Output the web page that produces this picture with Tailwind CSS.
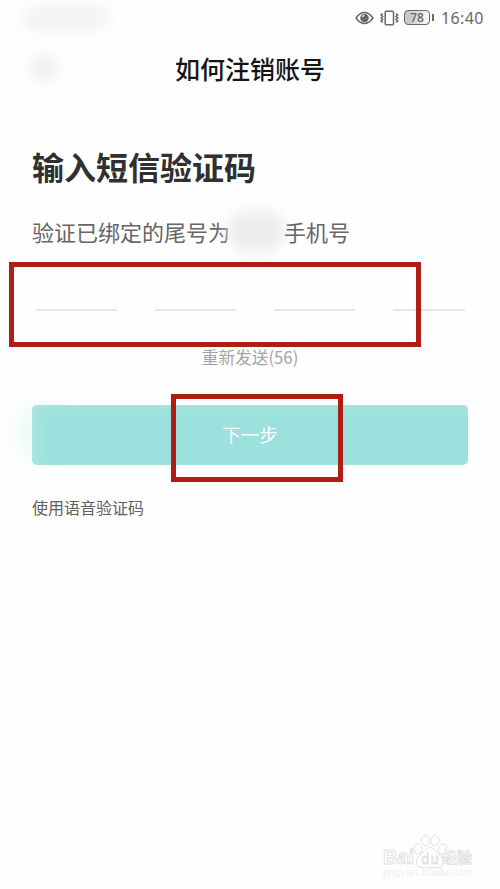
<!DOCTYPE html>
<html lang="zh-CN">
<head>
<meta charset="utf-8">
<title>如何注销账号</title>
<script src="https://cdn.jsdelivr.net/npm/@tailwindcss/browser@4"></script>
</head>
<body class="bg-[#fefefe] font-['Noto_Sans_CJK_SC',sans-serif]">
<div class="relative flex h-[889px] w-[500px] flex-col overflow-hidden">
  <!-- status bar -->
  <header class="flex h-[35px] items-center justify-between pr-[16px] pl-6 text-[#686868]">
    <div class="h-4 w-[84px] rounded-full bg-[#ececec] blur-[9px]"></div>
    <div class="flex items-center">
      <svg class="h-[14px] w-[19px]" viewBox="0 0 19 14" fill="none" stroke="currentColor" stroke-width="1.500"><path d="M1 7C4 2.700 6.500 1.500 9.500 1.500S15 2.700 18 7C15 11.300 12.500 12.500 9.500 12.500S4 11.300 1 7Z"/><circle cx="9.500" cy="7" r="4.300" fill="currentColor" stroke="none"/><path d="M9.200 3.200A2.300 2.300 0 0 1 7 6.200A3.600 3.600 0 0 1 9.200 3.200Z" fill="#fefefe" stroke="none"/></svg>
      <svg class="ml-[5px] h-4 w-[21px]" viewBox="0 0 21 16" fill="none" stroke="currentColor" stroke-width="1.500"><rect x="6.200" y="1.200" width="8.300" height="13.600" rx="1"/><path d="M3.700 3.500L2 5L3.700 6.500L2 8L3.700 9.500L2 11L3.700 12.500M17 3.500L18.700 5L17 6.500L18.700 8L17 9.500L18.700 11L17 12.500" stroke-width="1.500"/></svg>
      <div class="ml-[4px] flex items-center">
        <div class="flex h-[15px] w-[26px] items-center justify-center rounded-[4px] border-[1.500px] border-[#686868] bg-linear-to-r from-[#c9c9c9] from-20% to-[#f4f4f4] to-85% font-['Open_Sans',sans-serif] text-[12px] leading-none font-semibold">78</div>
        <div class="ml-[2px] h-[7px] w-[2px] bg-[#686868]"></div>
      </div>
      <time class="ml-[7px] w-[43px] font-['Noto_Sans',sans-serif] text-[16px] leading-5 tracking-[0.400px] whitespace-nowrap">16:40</time>
    </div>
  </header>
  <!-- title bar -->
  <div class="grid h-[66px] grid-cols-[1fr_auto_1fr] items-center px-8">
    <div class="h-6 w-6 rounded-full bg-[#e9e9e9] blur-[9px]"></div>
    <h1 class="text-[25px] leading-9 font-medium text-[#151515]">如何注销账号</h1>
  </div>
  <main class="flex flex-col px-8">
    <h2 class="mt-[41px] text-[32px] leading-[48px] font-bold text-[#303030]">输入短信验证码</h2>
    <p class="mt-[25px] flex h-8 items-center text-[22px] leading-8 whitespace-nowrap text-[#666]">
      <span>验证已绑定的尾号为</span>
      <span class="relative -ml-[2px] h-10 w-[57px] shrink-0 rounded-[40%] bg-[#ececec] blur-[7px]"></span>
      <span class="relative -ml-px">手机号</span>
    </p>
    <div class="mt-[62px] ml-1 flex h-[2px] w-[428px] gap-[38px]">
      <i class="w-[81px] shrink-0 bg-[#e5e5e5]"></i><i class="w-[81px] shrink-0 bg-[#e5e5e5]"></i><i class="w-[81px] shrink-0 bg-[#e5e5e5]"></i><i class="w-[72px] shrink-0 bg-[#e5e5e5]"></i>
    </div>
    <p class="mt-[34px] text-center text-[16.700px] leading-6 text-[#a4a4a4]">重新发送(56)</p>
    <div class="relative mt-[36px] h-[60px]">
      <div class="absolute top-1 -left-3 h-[46px] w-10 rounded-full bg-[#b8eee9]/35 blur-[12px]"></div>
      <button class="relative flex h-full w-full items-center justify-center rounded-[5px] bg-[#9ce1dd] text-[18.500px] text-white shadow-[inset_12px_6px_14px_-6px_#afe5e0]">下一步</button>
    </div>
    <p class="mt-[30px] text-[16px] leading-6 text-[#606060]">使用语音验证码</p>
  </main>
  <!-- highlight frames over the form -->
  <div class="absolute top-[262px] left-[9px] h-[85px] w-[412px] border-[5px] border-[#b01d14]"></div>
  <div class="absolute top-[394px] left-[171px] h-[88px] w-[172px] border-[5px] border-[#b01d14]"></div>
  <!-- watermark -->
  <svg class="absolute top-[830px] left-[378px] h-[54px] w-[104px]" viewBox="0 0 104 54" fill="#fff" stroke="#dfdfdf" stroke-width="1">
    <g><ellipse cx="40" cy="19" rx="4" ry="5" transform="rotate(-15 40 19)"/><ellipse cx="47.500" cy="10.500" rx="4" ry="5.200"/><ellipse cx="57" cy="10.500" rx="4" ry="5.200"/><ellipse cx="64.500" cy="19" rx="4" ry="5" transform="rotate(15 64.500 19)"/><path d="M52 17.500C48 17.500 46 22 42 25.500C37 29 37 37 44 37.500C48 38 56 38 60 37.500C67 37 67 29 62 25.500C58 22 56 17.500 52 17.500Z"/></g>
    <text x="5" y="34" font-family="Liberation Sans" font-size="20" font-weight="700" stroke-width="0.900" textLength="31" lengthAdjust="spacingAndGlyphs">Bai</text>
    <text x="43.500" y="34" font-family="Liberation Sans" font-size="14" stroke-width="0.900" textLength="17">du</text>
    <text x="64" y="33" font-family="Noto Sans CJK SC" font-size="15" font-weight="700" stroke-width="0.800" textLength="30">经验</text>
    <text x="5" y="46" font-family="Liberation Sans" font-size="11" fill="#efefef" stroke="none" textLength="90">jingyan.baidu.com</text>
  </svg>
</div>
</body>
</html>
